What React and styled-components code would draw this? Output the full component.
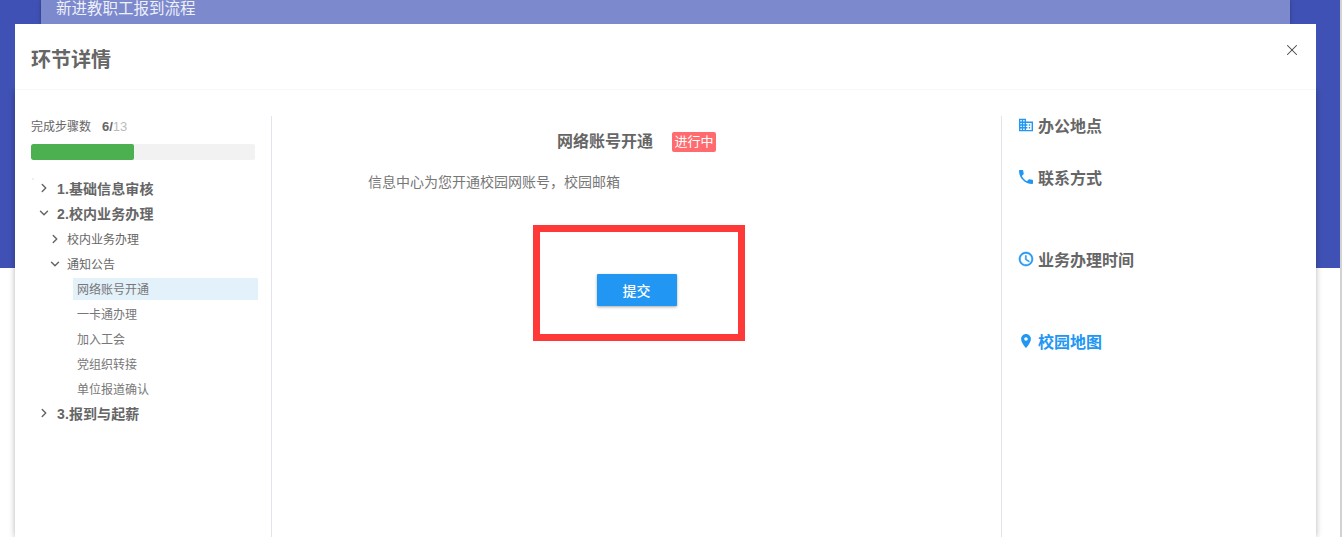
import React from "react";
import styled, { createGlobalStyle } from "styled-components";
import { ChevronRight, ChevronDown, X } from "lucide-react";

const font = `"Microsoft YaHei", "Liberation Sans", "Noto Sans CJK SC", sans-serif`;
const Global = createGlobalStyle`
  html, body { margin: 0; height: 100%; overflow: hidden; background: #fff; font-family: ${font}; }
  * { box-sizing: border-box; }
`;
const Page = styled.div`width: 1343px; height: 537px; position: relative; overflow: hidden; background: #fff; display: flex;`;
const Main = styled.div`width: 1340px; flex: none;`;
const Rail = styled.div`width: 3px; flex: none; border-left: 2px solid #d2d2d2;`;
const Banner = styled.div`height: 268px; background: #3f51b5; padding: 0 50px 0 41px;`;
const BannerBar = styled.div`
  height: 24px; background: #7c89cd; color: #eef0fa; font-size: 15.5px; line-height: 18px; padding-left: 15px;
  box-shadow: 0 0 4px rgba(0,0,0,.3);
`;
const Modal = styled.div`
  position: absolute; left: 15px; top: 24px; width: 1301px; height: 513px; background: #fff;
  display: flex; flex-direction: column;
`;
const ModalHead = styled.div`
  height: 66px; flex: none; border-bottom: 1px solid #f7f7f7; padding: 23px 16px 0; position: relative; z-index: 1; background: #fff;
`;
const ModalTitle = styled.div`font-size: 20px; line-height: 26px; font-weight: 700; color: #666;`;
const Close = styled.button`
  position: absolute; right: 15px; top: 17px; width: 18px; height: 18px; padding: 0; border: 0; background: none;
  color: #444; display: flex;
`;
const Body = styled.div`flex: 1; display: flex; padding-top: 26px; min-height: 0; box-shadow: 0 0 6px rgba(0,0,0,.3); background: #fff;`;
const Left = styled.div`width: 257px; flex: none; border-right: 1px solid #e3e3ec; padding: 0 16px;`;
const Steps = styled.div`font-size: 12px; line-height: 18px; height: 20px; padding-top: 2px; color: #666; display: flex;`;
const StepNum = styled.span`margin-left: 11px; font-weight: 700; font-size: 13px; color: #666;`;
const StepTotal = styled.span`color: #bbb; font-weight: 400;`;
const Track = styled.div`width: 224px; height: 16px; margin-top: 8px; background: #f2f2f2; border-radius: 2px; overflow: hidden;`;
const Fill = styled.div`height: 100%; background: #4caf50; border-radius: 2px;`;
const Tree = styled.div`
  margin-top: 16px; width: 227px; display: flex; flex-direction: column; position: relative;
  &::before { content: ""; position: absolute; left: 1px; top: 2px; width: 2px; height: 2px; background: #eee; }
`;
const Row = styled.div`
  height: 25px; display: flex; align-items: center; color: #666; flex: none;
  padding-left: ${p => p.$indent}px;
  padding-bottom: ${p => (p.$bold ? 2 : 0)}px;
  font-size: ${p => (p.$bold ? 14 : 12)}px;
  font-weight: ${p => (p.$bold ? 700 : 400)};
  letter-spacing: ${p => (p.$bold ? ".1px" : 0)};
`;
const Arrow = styled.span`width: ${p => p.$w}px; flex: none; display: flex; color: #666;`;
const Leaf = styled.div`
  height: 22px; margin: 1.5px 0 1.5px 42px; padding-left: 4px; width: 185px; display: flex; align-items: center; flex: none;
  font-size: 12px; color: #777; background: ${p => (p.$active ? "#e3f1fb" : "transparent")};
`;
const Center = styled.div`width: 729px; flex: none; display: flex; flex-direction: column; align-items: center;`;
const TitleRow = styled.div`display: flex; align-items: center; height: 20px; margin-top: 16px;`;
const StepTitle = styled.div`font-size: 16px; font-weight: 700; color: #666; line-height: 20px;`;
const Badge = styled.span`
  margin-left: 19px; width: 44px; height: 20px; background: #ff6b6e; color: #fff; border-radius: 2px;
  font-size: 13px; line-height: 20px; text-align: center;
`;
const Desc = styled.div`align-self: flex-start; margin: 20px 0 0 96px; font-size: 14px; line-height: 20px; color: #777; white-space: nowrap;`;
const Frame = styled.div`
  width: 212px; height: 116px; margin: 33px 0 0 4px; border: 7px solid #ff3838;
  display: flex; justify-content: center; padding: 42px 4px 0 0;
`;
const Submit = styled.button`
  width: 80px; height: 32px; border: 0; border-radius: 1px; background: #2196f3; color: #fff; font-family: ${font};
  font-size: 14px; font-weight: 500; box-shadow: 0 1px 3px rgba(0,0,0,.35); padding: 0;
`;
const Right = styled.div`flex: 1; border-left: 1px solid #e3e3ec; padding-left: 17px; display: flex; flex-direction: column;`;
const Info = styled.div`
  display: flex; align-items: center; height: 20px; margin-top: ${p => p.$top}px;
  font-size: 16px; font-weight: 700; color: ${p => (p.$link ? "#2196f3" : "#666")};
`;
const InfoIcon = styled.svg`width: 14px; height: 14px; flex: none; margin-right: 5px; fill: #2196f3; overflow: visible;`;
const ClockPath = styled.path`stroke: #2196f3; stroke-width: 0.7;`;

const Chev = ({ open, size = 14 }) => (open ? <ChevronDown size={size} strokeWidth={2.5} /> : <ChevronRight size={size} strokeWidth={2.5} />);

export default function App() {
  return (
    <Page>
      <Global />
      <Main>
        <Banner><BannerBar>新进教职工报到流程</BannerBar></Banner>
      </Main>
      <Rail />
      <Modal>
        <ModalHead>
          <ModalTitle>环节详情</ModalTitle>
          <Close aria-label="close"><X size={18} strokeWidth={1.4} /></Close>
        </ModalHead>
        <Body>
          <Left>
            <Steps>完成步骤数<StepNum>6/<StepTotal>13</StepTotal></StepNum></Steps>
            <Track><Fill style={{ width: `${(6 / 13) * 100}%` }} /></Track>
            <Tree>
              <Row $bold $indent={6}><Arrow $w={20}><Chev /></Arrow>1.基础信息审核</Row>
              <Row $bold $indent={6}><Arrow $w={20}><Chev open /></Arrow>2.校内业务办理</Row>
              <Row $indent={17}><Arrow $w={19}><Chev /></Arrow>校内业务办理</Row>
              <Row $indent={17}><Arrow $w={19}><Chev open /></Arrow>通知公告</Row>
              <Leaf $active>网络账号开通</Leaf>
              <Leaf>一卡通办理</Leaf>
              <Leaf>加入工会</Leaf>
              <Leaf>党组织转接</Leaf>
              <Leaf>单位报道确认</Leaf>
              <Row $bold $indent={6}><Arrow $w={20}><Chev /></Arrow>3.报到与起薪</Row>
            </Tree>
          </Left>
          <Center>
            <TitleRow><StepTitle>网络账号开通</StepTitle><Badge>进行中</Badge></TitleRow>
            <Desc>信息中心为您开通校园网账号，校园邮箱</Desc>
            <Frame><Submit>提交</Submit></Frame>
          </Center>
          <Right>
            <Info $top={-1}>
              <InfoIcon viewBox="2 3 20 18"><path d="M12 7V3H2v18h20V7H12zM6 19H4v-2h2v2zm0-4H4v-2h2v2zm0-4H4V9h2v2zm0-4H4V5h2v2zm4 12H8v-2h2v2zm0-4H8v-2h2v2zm0-4H8V9h2v2zm0-4H8V5h2v2zm10 12h-8v-2h2v-2h-2v-2h2v-2h-2V9h8v10zm-2-8h-2v2h2v-2zm0 4h-2v2h2v-2z" /></InfoIcon>
              办公地点
            </Info>
            <Info $top={32}>
              <InfoIcon viewBox="3 3 18 18"><path d="M6.62 10.79c1.44 2.83 3.76 5.14 6.59 6.59l2.2-2.2c.27-.27.67-.36 1.02-.24 1.12.37 2.33.57 3.57.57.55 0 1 .45 1 1V20c0 .55-.45 1-1 1-9.39 0-17-7.61-17-17 0-.55.45-1 1-1h3.500c.55 0 1 .45 1 1 0 1.25.2 2.45.57 3.57.11.35.03.74-.25 1.02l-2.2 2.2z" /></InfoIcon>
              联系方式
            </Info>
            <Info $top={62}>
              <InfoIcon viewBox="2 2 20 20"><ClockPath d="M11.99 2C6.47 2 2 6.48 2 12s4.47 10 9.990 10C17.52 22 22 17.52 22 12S17.52 2 11.99 2zM12 20c-4.42 0-8-3.58-8-8s3.58-8 8-8 8 3.58 8 8-3.58 8-8 8zm.5-13H11v6l5.25 3.15.75-1.23-4.5-2.67z" /></InfoIcon>
              业务办理时间
            </Info>
            <Info $top={62} $link>
              <InfoIcon viewBox="2 2 20 20"><path d="M12 2C8.13 2 5 5.13 5 9c0 5.25 7 13 7 13s7-7.75 7-13c0-3.87-3.13-7-7-7zm0 9.500c-1.38 0-2.500-1.12-2.500-2.500s1.120-2.500 2.500-2.500 2.500 1.120 2.500 2.500-1.120 2.500-2.500 2.500z" /></InfoIcon>
              校园地图
            </Info>
          </Right>
        </Body>
      </Modal>
    </Page>
  );
}
